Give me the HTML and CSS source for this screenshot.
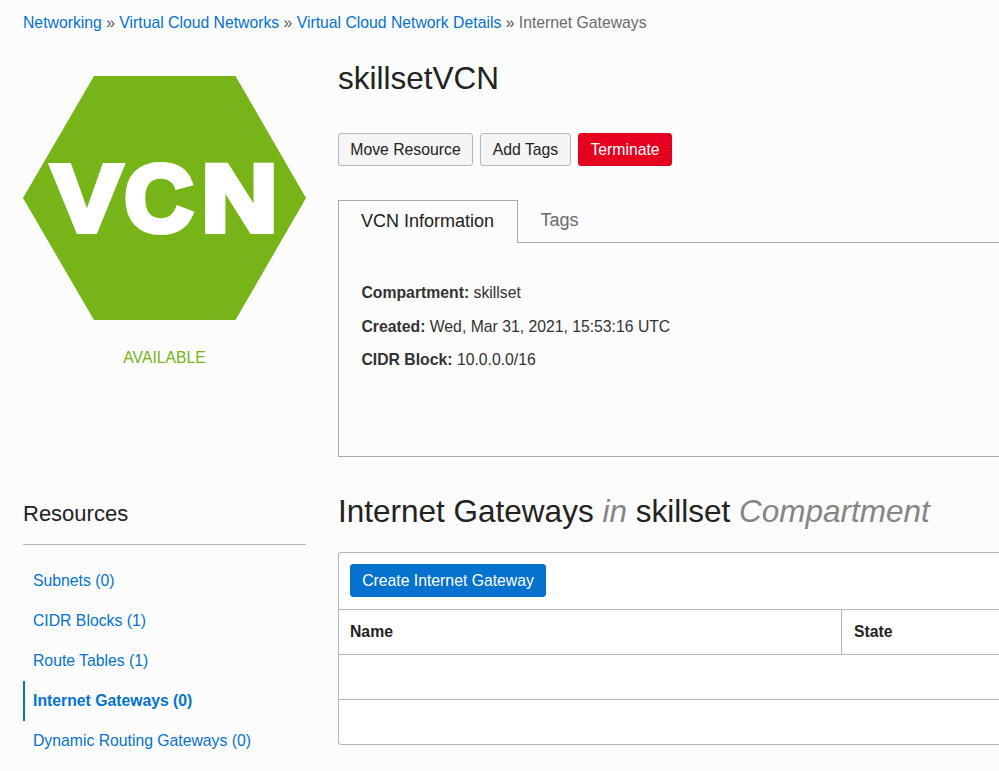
FILE: index.html
```html
<!DOCTYPE html>
<html lang="en">
<head>
<meta charset="utf-8">
<title>Internet Gateways</title>
<link rel="stylesheet" href="styles.css">
</head>
<body>
<nav class="breadcrumb"><a href="#">Networking</a> » <a href="#">Virtual Cloud Networks</a> » <a href="#">Virtual Cloud Network Details</a> » <span>Internet Gateways</span></nav>
<div class="layout">
  <aside class="sidebar">
    <div class="status">
      <svg class="hexagon" width="283" height="244" viewBox="0 0 283 244">
        <polygon points="0,122 71,0 212.5,0 283,122 212.5,244 71,244"/>
        <g class="hex-label">
          <text transform="translate(29 155) scale(1.11 1)">V</text>
          <text transform="translate(101.5 155) scale(1.01 1)">C</text>
          <text transform="translate(178.5 155) scale(1.12 1)">N</text>
        </g>
      </svg>
      <p class="state">AVAILABLE</p>
    </div>
    <h2 class="resources-title">Resources</h2>
    <ul class="resources">
      <li><a href="#">Subnets (0)</a></li>
      <li><a href="#">CIDR Blocks (1)</a></li>
      <li><a href="#">Route Tables (1)</a></li>
      <li class="active"><a href="#">Internet Gateways (0)</a></li>
      <li><a href="#">Dynamic Routing Gateways (0)</a></li>
    </ul>
  </aside>
  <main class="content">
    <h1 class="title">skillsetVCN</h1>
    <div class="actions">
      <button class="btn move">Move Resource</button>
      <button class="btn add">Add Tags</button>
      <button class="btn danger">Terminate</button>
    </div>
    <div class="tabs">
      <div class="tab selected">VCN Information</div>
      <div class="tab">Tags</div>
    </div>
    <div class="panel">
      <p><b>Compartment:</b> skillset</p>
      <p><b>Created:</b> Wed, Mar 31, 2021, 15:53:16 UTC</p>
      <p><b>CIDR Block:</b> 10.0.0.0/16</p>
    </div>
    <h1 class="list-title">Internet Gateways <em>in</em> skillset <em>Compartment</em></h1>
    <section class="table">
      <div class="toolbar"><button class="btn primary">Create Internet Gateway</button></div>
      <div class="row head"><div class="cell name">Name</div><div class="cell">State</div></div>
      <div class="row"></div>
      <div class="row"></div>
    </section>
  </main>
</div>
</body>
</html>
```
FILE: styles.css
```css
* { box-sizing: border-box; }
body {
  margin: 0;
  height: 771px;
  overflow: hidden;
  background: #fcfcfc;
  color: #333;
  font: 15.75px/20px "Liberation Sans", Arial, sans-serif;
}
h1, h2, p, ul { margin: 0; padding: 0; font-weight: 400; }
a { color: #0572ce; text-decoration: none; }
.breadcrumb { height: 44px; padding: 13px 0 0 23px; white-space: nowrap; color: #555; }
.breadcrumb span { color: #6b6b6b; }
.layout { display: flex; gap: 32px; padding-left: 23px; }
.sidebar { flex: 0 0 283px; }
.status { height: 456px; padding-top: 32px; }
.hexagon { display: block; fill: #76b418; }
.hex-label { fill: #fff; stroke: #fff; stroke-width: 6px; font-size: 94px; font-weight: 700; }
.state { margin-top: 28px; text-align: center; color: #76b418; }
.resources-title { height: 45px; padding-top: 1px; border-bottom: 1px solid #b3b8c0; font-size: 22px; line-height: 26px; color: #222; }
.resources { padding-top: 16px; list-style: none; }
.resources li { height: 40px; padding-left: 10px; line-height: 40px; white-space: nowrap; }
.resources .active { padding-left: 8px; border-left: 2px solid #0572ce; font-weight: 700; }
.content { flex: 1; min-width: 0; }
.title { height: 89px; padding-top: 14px; font-size: 31.5px; line-height: 40px; color: #222; }
.actions { display: flex; gap: 7px; }
.btn { height: 33px; padding: 0; border: 1px solid #b3b8c0; border-radius: 3px; background: #f5f5f5; color: #222; font: inherit; white-space: nowrap; }
.move { width: 135px; }
.add { width: 91px; }
.danger { width: 94px; border-color: #e6001f; background: #e6001f; color: #fff; }
.primary { width: 196px; border-color: #0572ce; background: #0572ce; color: #fff; }
.tabs { display: flex; height: 43px; margin-top: 34px; font-size: 18px; line-height: 41px; color: #6b6b6b; }
.tab { flex: 1; padding-left: 22.5px; border-bottom: 1px solid #a9a9a9; }
.selected { flex: 0 0 180px; padding-left: 22px; border: solid #a9a9a9; border-width: 1px 1px 0; color: #222; }
.panel { height: 214px; padding: 40px 0 0 22.5px; border: solid #a9a9a9; border-width: 0 0 1px 1px; }
.panel p { margin-bottom: 13.5px; }
.list-title { height: 95px; padding-top: 34px; font-size: 31.5px; line-height: 40px; color: #222; white-space: nowrap; }
.list-title em { color: #858585; }
.table { border: 1px solid #b3b8c0; border-right: 0; border-radius: 3px 0 0 3px; background: #fff; }
.toolbar { height: 56px; padding: 11px; }
.row { display: flex; height: 45px; border-top: 1px solid #b3b8c0; }
.head { color: #222; font-weight: 700; }
.cell { padding-left: 12px; line-height: 43px; }
.name { flex: 0 0 503px; padding-left: 11px; border-right: 1px solid #b3b8c0; }
```
